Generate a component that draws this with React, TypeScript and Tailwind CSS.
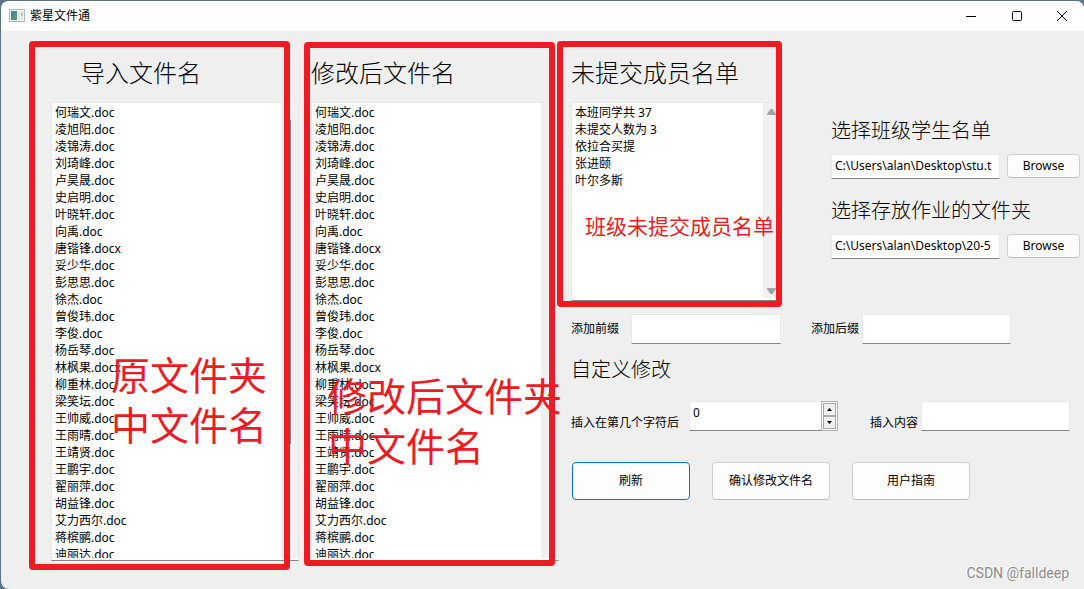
import { useState } from 'react'
import type { ReactNode } from 'react'

const FILES = [
  '何瑞文.doc', '凌旭阳.doc', '凌锦涛.doc', '刘琦峰.doc', '卢昊晟.doc', '史启明.doc', '叶晓轩.doc',
  '向禹.doc', '唐锴锋.docx', '妥少华.doc', '彭思思.doc', '徐杰.doc', '曾俊玮.doc', '李俊.doc',
  '杨岳琴.doc', '林枫果.docx', '柳重林.doc', '梁笑坛.doc', '王帅威.doc', '王雨晴.doc', '王靖贤.doc',
  '王鹏宇.doc', '翟丽萍.doc', '胡益锋.doc', '艾力西尔.doc', '蒋槟鹂.doc', '迪丽达.doc',
]

const MISSING = ['本班同学共 37', '未提交人数为 3', '依拉合买提', '张进颐', '叶尔多斯']

const FIELD = 'min-w-0 bg-white border border-[#e9e9e9] border-b-[#858585] px-[3px] outline-none'
const BUTTON = 'bg-[#fdfdfd] border border-[#d0d0d0] border-b-[#bcbcbc] rounded'

function TitleBar() {
  return (
    <header className="flex h-[30px] shrink-0 items-center bg-white">
      <svg className="ml-2 shrink-0" width="16" height="14" viewBox="0 0 16 14">
        <defs>
          <linearGradient id="pane" x1="0" y1="0" x2="0.4" y2="1">
            <stop offset="0" stopColor="#4d7fb0" />
            <stop offset="1" stopColor="#4f9a78" />
          </linearGradient>
        </defs>
        <rect x="0.5" y="0.5" width="15" height="12" fill="#f3f3f3" stroke="#b4b6ba" />
        <rect x="2" y="2" width="6" height="9" fill="url(#pane)" />
        <rect x="9" y="4" width="2" height="7" fill="#dfe3e6" />
        <rect x="12" y="3" width="2" height="4" fill="#a9cfae" />
        <rect x="12" y="7" width="2" height="4" fill="#dfe3e6" />
      </svg>
      <h1 className="ml-[5px] flex-1">紫星文件通</h1>
      <button aria-label="最小化" className="flex h-full w-[46px] items-center justify-center">
        <svg width="10" height="11" viewBox="0 0 10 11" stroke="#000"><path d="M0 5.500h10" /></svg>
      </button>
      <button aria-label="最大化" className="flex h-full w-[46px] items-center justify-center">
        <svg width="10" height="10" viewBox="0 0 10 10" fill="none" stroke="#000">
          <rect x="0.5" y="0.5" width="9" height="9" rx="1" />
        </svg>
      </button>
      <button aria-label="关闭" className="flex h-full w-11 items-center justify-center">
        <svg width="10" height="10" viewBox="0 0 10 10" stroke="#000"><path d="M0 0l10 10M10 0L0 10" /></svg>
      </button>
    </header>
  )
}

function ListBox({ items, children }: { items: string[]; children: ReactNode }) {
  return (
    <div className="flex min-h-0 flex-1 border border-[#e9e9e9] border-b-[#858585] bg-white pb-0.5">
      <ul className="min-w-0 flex-1 overflow-hidden pt-px pl-[3px] leading-[17px]">
        {items.map(name => <li key={name}>{name}</li>)}
      </ul>
      <div className="flex w-[17px] flex-col items-center bg-[#f0f0f0]">{children}</div>
    </div>
  )
}

function ColumnTitle({ children, indent }: { children: ReactNode; indent?: boolean }) {
  return (
    <h2 className={`${indent ? 'pl-[30px]' : ''} mb-[11px] pt-6 text-2xl leading-9 font-light whitespace-nowrap`}>
      {children}
    </h2>
  )
}

function PathPicker({ id, label, value }: { id: string; label: string; value: string }) {
  return (
    <div>
      <label htmlFor={id} className="block text-xl leading-6 font-light whitespace-nowrap">{label}</label>
      <div className="mt-[11px] flex gap-[7px]">
        <input id={id} defaultValue={value} className={`${FIELD} h-[25px] flex-1 pb-0.5`} />
        <button className={`${BUTTON} h-6 w-[73px]`}>Browse</button>
      </div>
    </div>
  )
}

function Stepper() {
  const [count, setCount] = useState(0)
  return (
    <div className="flex h-[30px] w-[149px] border border-[#e9e9e9] border-b-[#858585] bg-white">
      <input
        id="position"
        type="number"
        value={count}
        onChange={e => setCount(Number(e.target.value))}
        className="h-5 min-w-0 flex-1 pl-[3px] outline-none [appearance:textfield] [&::-webkit-inner-spin-button]:appearance-none"
      />
      <div className="-my-px -mr-px flex w-[17px] flex-col border border-[#b0b0b8] bg-white p-px">
        <button
          aria-label="增加"
          onClick={() => setCount(count + 1)}
          className="flex flex-1 items-center justify-center border border-[#a9a9a9] bg-[#f0f0f0]"
        >
          <svg width="5" height="3" viewBox="0 0 5 3"><path d="M0 3L2.5 0L5 3z" /></svg>
        </button>
        <button
          aria-label="减少"
          onClick={() => setCount(Math.max(0, count - 1))}
          className="flex flex-1 items-center justify-center border border-[#a9a9a9] bg-[#f0f0f0]"
        >
          <svg width="5" height="3" viewBox="0 0 5 3"><path d="M0 0L2.500 3L5 0z" /></svg>
        </button>
      </div>
    </div>
  )
}

export default function App() {
  return (
    <div className="h-screen min-h-[480px] bg-[#5b7688] pt-px pl-px font-['Noto_Sans','Noto_Sans_CJK_SC',sans-serif] text-xs text-black">
      <div className="relative flex h-full flex-col overflow-hidden rounded-t-lg rounded-bl-lg bg-[#efefef]">
        <TitleBar />

        <main className="grid min-h-0 flex-1 grid-cols-[248fr_248fr_509fr] gap-3 pr-1 pb-7 pl-[50px]">
          <section className="relative flex min-h-0 flex-col">
            <ColumnTitle indent>导入文件名</ColumnTitle>
            <ListBox items={FILES}>
              <div className="mt-[17px] h-[324px] w-[3px] bg-[#858585]" />
            </ListBox>
            <div className="absolute top-2.5 right-[9px] -bottom-[9px] -left-[22px] rounded border-6 border-[#ed1c24]" />
            <p className="absolute top-[319px] left-[60px] text-[39px] leading-[50px] whitespace-nowrap text-[#ed1c24]">
              原文件夹<br />中文件名
            </p>
          </section>

          <section className="relative flex min-h-0 flex-col">
            <ColumnTitle>修改后文件名</ColumnTitle>
            <ListBox items={FILES}>{null}</ListBox>
            <div className="absolute top-[11px] right-1 -bottom-[5px] -left-[7px] rounded border-6 border-[#ed1c24]" />
            <p className="absolute top-[340px] left-[17px] text-[39px] leading-[50px] whitespace-nowrap text-[#ed1c24]">
              修改后文件夹<br />中文件名
            </p>
          </section>

          <section className="min-w-0">
            <div className="flex gap-[50px]">
              <div className="relative flex h-[270px] w-[210px] shrink-0 flex-col">
                <ColumnTitle>未提交成员名单</ColumnTitle>
                <ListBox items={MISSING}>
                  <svg className="mt-1.5" width="9" height="6" viewBox="0 0 9 6" fill="#a3a3a3"><path d="M3.500 0h2L9 5v1H0V5z" /></svg>
                  <svg className="mt-auto mb-1" width="9" height="6" viewBox="0 0 9 6" fill="#a3a3a3"><path d="M0 0h9v1L5.500 6h-2L0 1z" /></svg>
                </ListBox>
                <div className="absolute top-2.5 -right-px -bottom-1.5 -left-3.5 rounded border-6 border-[#ed1c24]" />
                <p className="absolute top-[181px] left-3.5 text-[21px] leading-7 whitespace-nowrap text-[#ed1c24]">
                  班级未提交成员名单
                </p>
              </div>
              <div className="flex min-w-0 flex-1 flex-col gap-5 pt-[88px]">
                <PathPicker id="roster" label="选择班级学生名单" value="C:\Users\alan\Desktop\stu.t" />
                <PathPicker id="folder" label="选择存放作业的文件夹" value="C:\Users\alan\Desktop\20-5" />
              </div>
            </div>

            <div className="mt-[13px] flex items-center gap-[30px]">
              <div className="flex items-center gap-3">
                <label htmlFor="prefix" className="whitespace-nowrap">添加前缀</label>
                <input id="prefix" className={`${FIELD} h-[30px] w-[150px]`} />
              </div>
              <div className="flex items-center gap-[3px]">
                <label htmlFor="suffix" className="whitespace-nowrap">添加后缀</label>
                <input id="suffix" className={`${FIELD} h-[30px] w-[149px]`} />
              </div>
            </div>

            <h2 className="mt-3.5 text-xl leading-6 font-light">自定义修改</h2>

            <div className="mt-[19px] flex gap-8">
              <div className="flex items-end gap-2.5">
                <label htmlFor="position" className="whitespace-nowrap">插入在第几个字符后</label>
                <Stepper />
              </div>
              <div className="flex items-end gap-[3px]">
                <label htmlFor="content" className="whitespace-nowrap">插入内容</label>
                <input id="content" className={`${FIELD} h-[30px] w-[149px]`} />
              </div>
            </div>

            <div className="mt-[31px] flex gap-[22px] pl-px">
              <button className="h-[38px] w-[118px] rounded border border-[#0078d4] bg-[#fdfdfd]">刷新</button>
              <button className={`${BUTTON} h-[38px] w-[118px]`}>确认修改文件名</button>
              <button className={`${BUTTON} h-[38px] w-[118px]`}>用户指南</button>
            </div>
          </section>
        </main>

        <p className="absolute right-[15px] bottom-1.5 font-['Roboto',sans-serif] text-sm text-[#8c8c8c] [text-shadow:-1px_-1px_0_#fff]">
          CSDN @falldeep
        </p>
      </div>
    </div>
  )
}
